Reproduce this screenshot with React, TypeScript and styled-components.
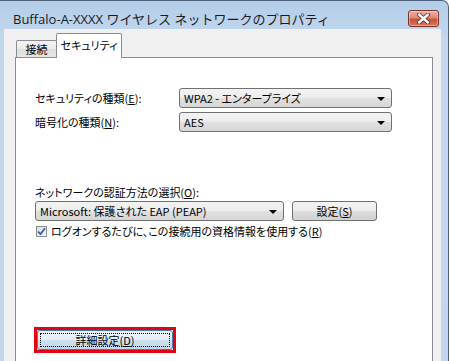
import styled, { createGlobalStyle, css } from 'styled-components';

const GlobalStyle = createGlobalStyle`
  html, body {
    margin: 0;
    padding: 0;
    background: #ffffff;
  }
  body {
    font-family: "Noto Sans CJK JP", "Noto Sans", sans-serif;
    font-size: 11px;
    font-feature-settings: "palt";
    color: #000000;
  }
  * {
    box-sizing: border-box;
  }
`;

const Window = styled.div`
  width: 449px;
  height: 361px;
  display: flex;
  flex-direction: column;
  overflow: hidden;
  background: linear-gradient(180deg, #b4cde8 0px, #c3d8ee 40px, #c2d7ed 100%);
  border-top: 1px solid #4d6278;
  border-right: 1px solid #4d6278;
  border-top-right-radius: 7px;
`;

const TitleBar = styled.div`
  height: 28px;
  flex: none;
  display: flex;
  justify-content: space-between;
  align-items: flex-start;
  padding: 0 9px 0 13px;
`;

const Title = styled.span`
  padding-top: 10px;
  line-height: 16px;
  font-family: "Open Sans", "Noto Sans CJK JP", sans-serif;
  font-size: 13px;
  font-feature-settings: normal;
  color: #1b1b1b;
  white-space: nowrap;
`;

const CloseButton = styled.div`
  margin-top: 9px;
  width: 31px;
  height: 17px;
  display: flex;
  align-items: center;
  justify-content: center;
  border: 1px solid #7a3326;
  border-radius: 3px;
  background: linear-gradient(180deg, #eab0a4 0%, #dc8a78 45%, #c9513a 55%, #d7785c 100%);
  box-shadow: inset 0 0 0 1px rgba(255, 255, 255, 0.35);
`;

const Body = styled.div`
  flex: 1;
  display: flex;
  flex-direction: column;
  margin: 0 7px 0 4px;
  padding: 4px 8px 0 11px;
  background: #f0f0f0;
`;

const TabStrip = styled.div`
  display: flex;
  align-items: flex-end;
  padding-left: 1px;
  height: 24px;
  flex: none;
  position: relative;
  z-index: 1;
`;

const Tab = styled.div<{ $active?: boolean }>`
  display: flex;
  align-items: center;
  justify-content: center;
  border: 1px solid #898c95;
  border-bottom: none;
  border-radius: 2px 2px 0 0;
  white-space: nowrap;
  ${({ $active }) =>
    $active
      ? css`
          width: 66px;
          height: 25px;
          margin-bottom: -1px;
          margin-left: -1px;
          padding-bottom: 3px;
          background: #ffffff;
        `
      : css`
          width: 41px;
          height: 17px;
          background: linear-gradient(180deg, #f3f3f3 0%, #ebebeb 50%, #dedede 51%, #e6e6e6 100%);
        `}
`;

const Panel = styled.div`
  flex: 1;
  display: flex;
  flex-direction: column;
  background: #ffffff;
  border: 1px solid #898c95;
  border-bottom: none;
  padding: 30px 0 0 19px;
`;

const FieldRow = styled.div<{ $top?: number }>`
  display: flex;
  align-items: center;
  height: 20px;
  margin-top: ${({ $top }) => $top ?? 0}px;
`;

const Label = styled.span<{ $width?: number; $top?: number }>`
  width: ${({ $width }) => ($width ? `${$width}px` : 'auto')};
  margin-top: ${({ $top }) => $top ?? 0}px;
  flex: none;
  line-height: 16px;
  white-space: nowrap;
`;

const Key = styled.span`
  text-decoration: underline;
  text-underline-offset: 1px;
`;

const Select = styled.div<{ $width: number }>`
  width: ${({ $width }) => $width}px;
  height: 20px;
  flex: none;
  display: flex;
  align-items: center;
  justify-content: space-between;
  padding: 0 6px 0 4px;
  border: 1px solid #707070;
  border-radius: 3px;
  background: linear-gradient(180deg, #f3f3f3 0%, #ececec 50%, #e0e0e0 51%, #d6d6d6 100%);
  white-space: nowrap;
`;

const Arrow = styled.span`
  width: 0;
  height: 0;
  border-left: 4px solid transparent;
  border-right: 4px solid transparent;
  border-top: 4px solid #000000;
  margin-top: 1px;
`;

const Button = styled.div<{ $width: number; $focused?: boolean }>`
  width: ${({ $width }) => $width}px;
  height: 20px;
  flex: none;
  display: flex;
  align-items: center;
  justify-content: center;
  border-radius: 3px;
  white-space: nowrap;
  position: relative;
  ${({ $focused }) =>
    $focused
      ? css`
          border: 1px solid #3c7fb1;
          background: linear-gradient(180deg, #eef5fb 0%, #e3eef7 50%, #cde0ee 51%, #c3d9ea 100%);
          &::after {
            content: '';
            position: absolute;
            inset: 2px;
            border: 1px dotted #000000;
          }
        `
      : css`
          border: 1px solid #707070;
          background: linear-gradient(180deg, #f3f3f3 0%, #ececec 50%, #dddddd 51%, #d0d0d0 100%);
        `}
`;

const Group = styled.div`
  display: flex;
  gap: 8px;
  margin-top: 1px;
`;

const CheckRow = styled.label`
  display: flex;
  align-items: center;
  gap: 4px;
  margin-top: 3px;
  padding-left: 1px;
  height: 14px;
  white-space: nowrap;
`;

const CheckBox = styled.span`
  width: 11px;
  height: 11px;
  flex: none;
  display: flex;
  align-items: center;
  justify-content: center;
  border: 1px solid #8e8f8f;
  background: linear-gradient(135deg, #dcdcdc 0%, #f6f6f6 100%);
`;

const Highlight = styled.div`
  margin-top: 89px;
  margin-left: -1px;
  width: 142px;
  border: 3px solid #e60012;
`;

const App = () => (
  <>
    <GlobalStyle />
    <Window>
      <TitleBar>
        <Title>Buffalo-A-XXXX ワイヤレス ネットワークのプロパティ</Title>
        <CloseButton>
          <svg width="13" height="11" viewBox="0 0 13 11">
            <path d="M2 1.5 L11 9.5 M11 1.5 L2 9.5" stroke="#5b2a22" strokeWidth="4" strokeLinecap="round" />
            <path d="M2 1.5 L11 9.5 M11 1.5 L2 9.5" stroke="#ffffff" strokeWidth="2.4" strokeLinecap="round" />
          </svg>
        </CloseButton>
      </TitleBar>
      <Body>
        <TabStrip>
          <Tab>接続</Tab>
          <Tab $active>セキュリティ</Tab>
        </TabStrip>
        <Panel>
          <FieldRow>
            <Label $width={144}>
              セキュリティの種類(<Key>E</Key>):
            </Label>
            <Select $width={213}>
              <span>WPA2 - エンタープライズ</span>
              <Arrow />
            </Select>
          </FieldRow>
          <FieldRow $top={4}>
            <Label $width={144}>
              暗号化の種類(<Key>N</Key>):
            </Label>
            <Select $width={213}>
              <span>AES</span>
              <Arrow />
            </Select>
          </FieldRow>
          <Label $top={52}>
            ネットワークの認証方法の選択(<Key>O</Key>):
          </Label>
          <Group>
            <Select $width={249}>
              <span>Microsoft: 保護された EAP (PEAP)</span>
              <Arrow />
            </Select>
            <Button $width={85}>
              <span>
                設定(<Key>S</Key>)
              </span>
            </Button>
          </Group>
          <CheckRow>
            <CheckBox>
              <svg width="9" height="9" viewBox="0 0 9 9">
                <path d="M1 4.5 L3.5 7.2 L8 1.2" fill="none" stroke="#2f5fb3" strokeWidth="1.8" />
              </svg>
            </CheckBox>
            <span>
              ログオンするたびに、この接続用の資格情報を使用する(<Key>R</Key>)
            </span>
          </CheckRow>
          <Highlight>
            <Button $width={136} $focused>
              <span>
                詳細設定(<Key>D</Key>)
              </span>
            </Button>
          </Highlight>
        </Panel>
      </Body>
    </Window>
  </>
);

export default App;
